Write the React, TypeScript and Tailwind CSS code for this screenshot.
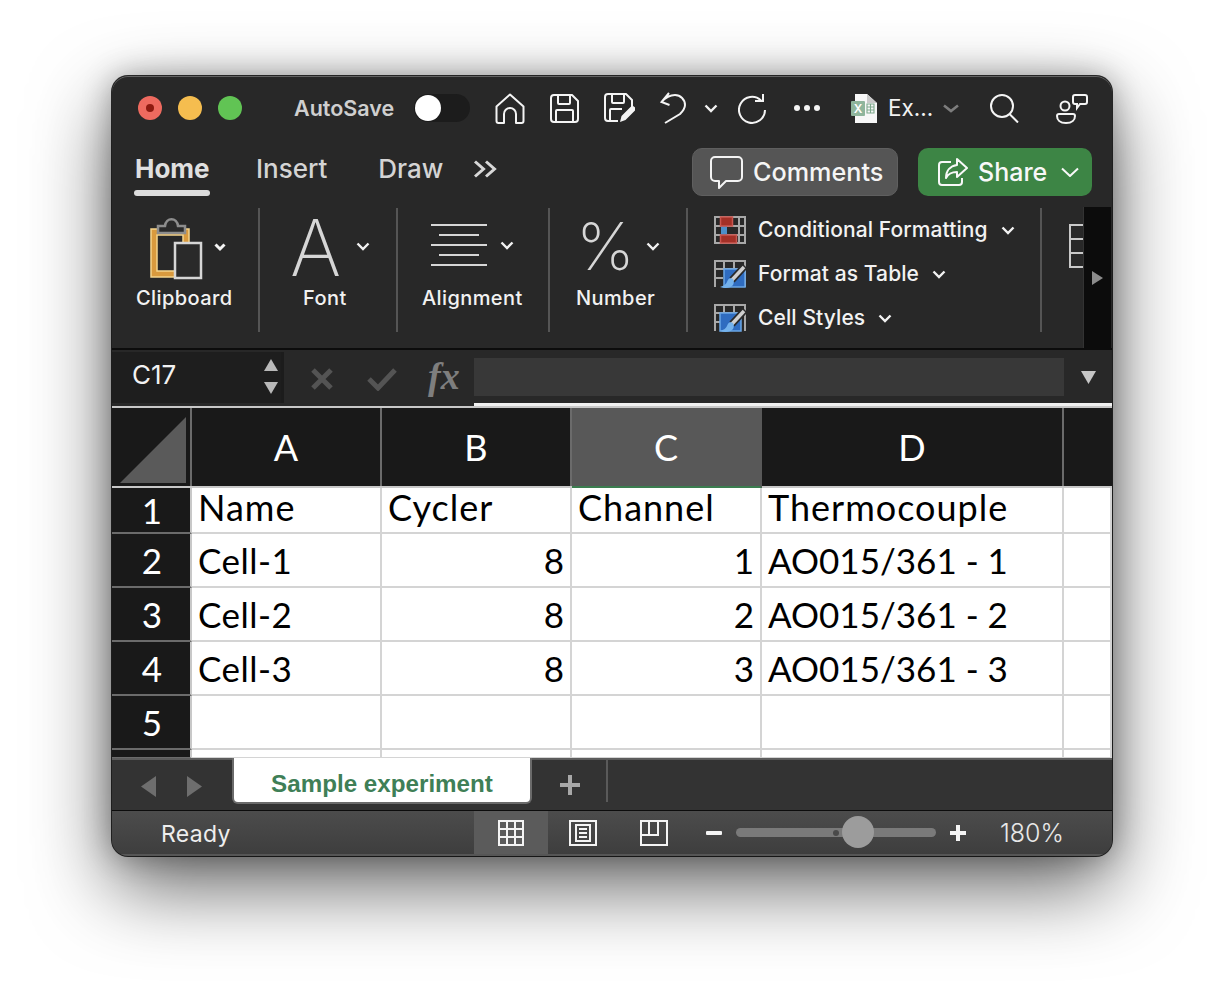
const ui = "font-['Inter',sans-serif]";
const cellFont = "font-['Lato',sans-serif]";

function Chev({ className = "" }: { className?: string }) {
  return (
    <svg viewBox="0 0 14 9" className={"w-[14px] h-[9px] " + className} fill="none" stroke="#f2f2f2" strokeWidth="2.4">
      <path d="M1.5 1.5 7 7l5.5-5.5" />
    </svg>
  );
}

function Lights() {
  return (
    <div className="flex gap-[16px] w-[104px]">
      <div className="w-[24px] h-[24px] rounded-full bg-[#ee6a5f] flex items-center justify-center">
        <div className="w-[8px] h-[8px] rounded-full bg-[#8e1a10]" />
      </div>
      <div className="w-[24px] h-[24px] rounded-full bg-[#f5bd4f]" />
      <div className="w-[24px] h-[24px] rounded-full bg-[#61c454]" />
    </div>
  );
}

function ToolIcons() {
  return (
    <div className="flex items-center">
      <svg viewBox="0 0 30 31" className="ml-[25px] w-[30px] h-[31px]" fill="none" stroke="#f4f4f4" strokeWidth="2" strokeLinejoin="round">
        <path d="M1.5 13.5 15 1.5l13.5 12v14.500a2 2 0 0 1-2 2H21v-9a6 6 0 0 0-12 0v9H3.500a2 2 0 0 1-2-2z" />
      </svg>
      <svg viewBox="0 0 29 29" className="ml-[25px] w-[29px] h-[29px]" fill="none" stroke="#f4f4f4" strokeWidth="2" strokeLinejoin="round">
        <path d="M4 1h18l6 6v18a3 3 0 0 1-3 3H4a3 3 0 0 1-3-3V4a3 3 0 0 1 3-3z" />
        <path d="M8 1v8a1 1 0 0 0 1 1h10a1 1 0 0 0 1-1V1M6 28V17a1 1 0 0 1 1-1h15a1 1 0 0 1 1 1v11" />
      </svg>
      <svg viewBox="0 0 31 30" className="ml-[25px] w-[31px] h-[30px]" fill="none" stroke="#f4f4f4" strokeWidth="2" strokeLinejoin="round">
        <path d="M14 28H4a3 3 0 0 1-3-3V4a3 3 0 0 1 3-3h18l6 6v7" />
        <path d="M8 1v8a1 1 0 0 0 1 1h10a1 1 0 0 0 1-1V1M6 28V17a1 1 0 0 1 1-1h11" />
        <path d="M16 29l1.500-6 9-9a2.500 2.500 0 0 1 4 4l-9 9z" fill="#f4f4f4" stroke="none" />
      </svg>
      <svg viewBox="0 0 27 32" className="ml-[25px] w-[27px] h-[32px]" fill="none" stroke="#f4f4f4" strokeWidth="2">
        <path d="M9 1 1.500 10l8 3M1.500 10C6 5 11 3 15 3a10 10 0 0 1 10 10c0 4-2 6-5 9L5 31" />
      </svg>
      <Chev className="ml-[17px]" />
      <svg viewBox="0 0 28 31" className="ml-[20px] w-[28px] h-[31px]" fill="none" stroke="#f4f4f4" strokeWidth="2">
        <path d="M23 7.500A13 13 0 1 0 27 17" />
        <path d="M25 1v7h-8" />
      </svg>
      <div className="ml-[28px] flex gap-[4px] w-[26px]">
        <div className="w-[6px] h-[6px] rounded-full bg-[#f4f4f4]" />
        <div className="w-[6px] h-[6px] rounded-full bg-[#f4f4f4]" />
        <div className="w-[6px] h-[6px] rounded-full bg-[#f4f4f4]" />
      </div>
      <svg viewBox="0 0 26 29" className="ml-[31px] w-[26px] h-[29px]">
        <path d="M4 0h12l10 9v20H4z" fill="#f7f7f7" />
        <path d="M16 0v9h10z" fill="#c9c9c9" />
        <rect x="0" y="7" width="14" height="15" rx="1" fill="#8fb59c" />
        <text x="7" y="19" textAnchor="middle" fontSize="12" fontFamily="Inter, sans-serif" fill="#fff" fontWeight="600">X</text>
        <path d="M16 10h7v9h-7zM16 13h7M16 16h7M19.500 10v9" stroke="#7fa98d" strokeWidth="1.100" fill="none" />
      </svg>
      <span className="ml-[11px] w-[46px] text-[22.500px] leading-[30px] text-[#f2f2f2]">Ex...</span>
      <svg viewBox="0 0 16 9" className="ml-[9px] w-[16px] h-[9px]" fill="none" stroke="#7d7d7d" strokeWidth="2.600">
        <path d="M1 1.500 8 7l7-5.500" />
      </svg>
      <svg viewBox="0 0 29 29" className="ml-[31px] w-[29px] h-[29px]" fill="none" stroke="#f4f4f4" strokeWidth="2">
        <circle cx="12" cy="12" r="11" />
        <path d="m19.500 20 8.500 8.500" />
      </svg>
      <svg viewBox="0 0 32 31" className="ml-[37px] w-[32px] h-[31px]" fill="none" stroke="#f4f4f4" strokeWidth="2">
        <circle cx="9" cy="13" r="4.500" />
        <path d="M3 21h14a2 2 0 0 1 2 2c0 4-3 7-9 7s-9-3-9-7a2 2 0 0 1 2-2z" />
        <path d="M19 2h10a2 2 0 0 1 2 2v5a2 2 0 0 1-2 2h-5l-3 4v-4h-2a2 2 0 0 1-2-2V4a2 2 0 0 1 2-2z" />
      </svg>
    </div>
  );
}

function Tabs() {
  return (
    <div className="flex h-[58px] items-start pl-[22px]">
      <div className="pt-[15px] w-[76px]">
        <div className="h-[28px] leading-[28px] text-[26px] font-bold text-[#e0e0e0] pl-[1px]">Home</div>
        <div className="mt-[7px] h-[6px] rounded-full bg-[#dcdcdc]" />
      </div>
      <div className="ml-[46px] pt-[15px] h-[28px] leading-[28px] text-[26px] font-medium text-[#d4d4d4] box-content">Insert</div>
      <div className="ml-[51px] pt-[15px] h-[28px] leading-[28px] text-[26px] font-medium text-[#d4d4d4] box-content">Draw</div>
      <svg viewBox="0 0 25 18" className="ml-[30px] mt-[20px] w-[25px] h-[18px]" fill="none" stroke="#d8d8d8" strokeWidth="3">
        <path d="m2 1.500 8.500 7.500L2 16.500M13 1.500 21.500 9 13 16.500" />
      </svg>
      <div className="ml-auto mr-[20px] mt-[8px] flex gap-[20px]">
        <div className="w-[206px] h-[48px] rounded-[10px] bg-[#555555] border border-[#5f5f5f] flex items-center pl-[17px] text-[#f5f5f5]">
          <svg viewBox="0 0 33 33" className="w-[33px] h-[33px]" fill="none" stroke="#f4f4f4" strokeWidth="2" strokeLinejoin="round">
            <path d="M5 1h23a4 4 0 0 1 4 4v16a4 4 0 0 1-4 4H16l-7 7v-7H5a4 4 0 0 1-4-4V5a4 4 0 0 1 4-4z" />
          </svg>
          <span className="ml-[10px] pt-[1px] text-[25.200px] font-medium">Comments</span>
        </div>
        <div className="w-[174px] h-[48px] rounded-[10px] bg-[#3d8545] flex items-center pl-[20px] text-[#f8f8f8]">
          <svg viewBox="0 0 30 28" className="w-[30px] h-[28px]" fill="none" stroke="#f8f8f8" strokeWidth="2" strokeLinejoin="round">
            <path d="M13 4H4a3 3 0 0 0-3 3v17a3 3 0 0 0 3 3h17a3 3 0 0 0 3-3v-4" />
            <path d="M19 1l10 9-10 9v-5c-6 0-9 2-11 6 0-7 4-12 11-13z" />
          </svg>
          <span className="ml-[10px] pt-[1px] text-[25px] font-medium">Share</span>
          <svg viewBox="0 0 18 10" className="ml-[14px] w-[18px] h-[10px]" fill="none" stroke="#f8f8f8" strokeWidth="2">
            <path d="M1 1.500 9 9l8-7.500" />
          </svg>
        </div>
      </div>
    </div>
  );
}

function Divider() {
  return <div className="mt-[10px] h-[124px] w-[2px] bg-[#555555]" />;
}

function Ribbon() {
  const label = "mt-[6px] h-[24px] leading-[24px] text-[20px] text-[#f2f2f2] font-medium whitespace-nowrap tracking-[0.4px]";
  return (
    <div className="flex h-[150px] relative">
      <div className="w-[146px] pl-[24px] pt-[20px]">
        <svg viewBox="0 0 80 62" className="ml-[12px] w-[80px] h-[62px]" fill="none">
          <path d="M3 11h38v17h-6V17H9v36h24v6H3z" fill="#d99a3e" stroke="#f5d58d" strokeWidth="1.500" />
          <path d="M10 8h7c1-9 12-9 13 0h7v7H10z" fill="#2a2a2a" stroke="#8d8d8d" strokeWidth="2.500" />
          <rect x="27" y="25" width="26" height="35" stroke="#d6d6d6" strokeWidth="2.500" fill="#2a2a2a" />
          <path d="M67.500 26.500 72 31l4.500-4.500" stroke="#f4f4f4" strokeWidth="3" />
        </svg>
        <div className={label}>Clipboard</div>
      </div>
      <Divider />
      <div className="w-[136px] pl-[30px] pt-[20px]">
        <div className="flex h-[62px]">
          <span className="w-[54px] -mt-[1px] h-[62px] text-[78px] leading-[62px] font-extralight text-[#d6d6d6]">A</span>
          <Chev className="ml-[12px] mt-[24px]" />
        </div>
        <div className={label + " pl-[13px]"}>Font</div>
      </div>
      <Divider />
      <div className="w-[150px] pl-[24px] pt-[20px]">
        <div className="flex h-[62px]">
          <svg viewBox="0 0 56 44" className="ml-[9px] mt-[6px] w-[56px] h-[44px]" stroke="#d6d6d6" strokeWidth="2">
            <path d="M0 1h56M8 11h40M0 21h56M8 31h40M0 41h56" />
          </svg>
          <Chev className="ml-[13px] mt-[23px]" />
        </div>
        <div className={label}>Alignment</div>
      </div>
      <Divider />
      <div className="w-[136px] pl-[26px] pt-[20px]">
        <div className="flex h-[62px]">
          <span className="w-[56px] -mt-[3px] h-[62px] text-[66px] leading-[62px] font-extralight text-[#d6d6d6]">%</span>
          <Chev className="ml-[14px] mt-[24px]" />
        </div>
        <div className={label}>Number</div>
      </div>
      <Divider />
      <div className="w-[352px] pl-[26px] pt-[16px] flex flex-col gap-[12px]">
        <StyleRow label="Conditional Formatting" icon={<CondIcon />} />
        <StyleRow label="Format as Table" icon={<TableIcon x={10} />} />
        <StyleRow label="Cell Styles" icon={<TableIcon x={6} />} />
      </div>
      <Divider />
      <div className="w-[41px] pt-[26px] pl-[27px]">
        <svg viewBox="0 0 16 44" className="w-[16px] h-[44px]" fill="none" stroke="#c9c9c9" strokeWidth="2">
          <path d="M15 1H1v42h14M1 15h14M1 29h14" />
        </svg>
      </div>
      <div className="w-[28px] mt-[9px] bg-[#0c0c0c] flex items-center justify-center border-l border-[#333]">
        <svg viewBox="0 0 11 14" className="mt-[1px] w-[11px] h-[14px]">
          <path d="M0 0l11 7-11 7z" fill="#8c8c8c" />
        </svg>
      </div>
    </div>
  );
}

function StyleRow({ label, icon }: { label: string; icon: React.ReactNode }) {
  return (
    <div className="h-[32px] flex items-center">
      {icon}
      <span className="ml-[12px] text-[21px] font-medium text-[#f2f2f2] tracking-[0.1px] whitespace-nowrap">{label}</span>
      <Chev className="ml-[13px]" />
    </div>
  );
}

function CondIcon() {
  return (
    <svg viewBox="0 0 32 28" className="w-[32px] h-[28px]" fill="none">
      <path d="M1 1h30v26H1zM1 10h30M1 19h30M25 1v26" stroke="#a8a8a8" strokeWidth="2" />
      <rect x="7" y="10" width="6" height="9" fill="#4d8fc9" />
      <rect x="6.500" y="1" width="12" height="9" fill="#a33027" stroke="#c9564f" strokeWidth="1.500" />
      <rect x="6.500" y="19" width="16" height="8" fill="#a33027" stroke="#c9564f" strokeWidth="1.500" />
    </svg>
  );
}

function TableIcon({ x }: { x: number }) {
  return (
    <svg viewBox="0 0 32 29" className="w-[32px] h-[29px]" fill="none">
      <path d="M1 27V1h30v26M1 9h30M1 18h8M10 1v8M20 1v8" stroke="#a8a8a8" strokeWidth="2" />
      <path d={`M${x} 9h21v18H${x}z`} fill="#2f6cc0" stroke="#6aa6e6" strokeWidth="1.500" />
      <path d="M31 6 18 20" stroke="#2a2a2a" strokeWidth="7" />
      <path d="M30 7 18 20" stroke="#cfcfcf" strokeWidth="3.500" />
      <path d="M19 19c-3-2-5 0-6 3-1 2-3 4-7 5 5 2 11 1 13-2 1-2 1-4 0-6z" fill="#74b2ec" />
    </svg>
  );
}

function FormulaBar() {
  return (
    <div className="flex h-[53px] bg-[#282828]">
      <div className="w-[172px] mt-[2px] bg-[#1e1e1e] flex pl-[20px] pt-[7px] border-r-[3px] border-[#1c1c1c]">
        <span className="text-[26px] leading-[32px] text-[#f2f2f2]">C17</span>
        <div className="ml-[88px] flex flex-col gap-[11px]">
          <svg viewBox="0 0 14 12" className="w-[14px] h-[12px]"><path d="M7 0l7 12H0z" fill="#b9b9b9" /></svg>
          <svg viewBox="0 0 14 12" className="w-[14px] h-[12px]"><path d="M7 12l7-12H0z" fill="#b9b9b9" /></svg>
        </div>
      </div>
      <svg viewBox="0 0 22 22" className="ml-[27px] mt-[18px] w-[22px] h-[22px]" fill="none" stroke="#545454" strokeWidth="5">
        <path d="m2 2 18 18M20 2 2 20" />
      </svg>
      <svg viewBox="0 0 30 24" className="ml-[34px] mt-[17px] w-[30px] h-[24px]" fill="none" stroke="#545454" strokeWidth="5">
        <path d="m2 12 9 9L28 3" />
      </svg>
      <span className="ml-[31px] mt-[6px] w-[30px] font-['Liberation_Serif',serif] italic font-bold text-[38px] leading-[40px] text-[#7e7e7e] whitespace-nowrap">fx</span>
      <div className="ml-[16px] mt-[8px] w-[590px] h-[38px] bg-[#383838]" />
      <svg viewBox="0 0 15 13" className="ml-[17px] mt-[21px] w-[15px] h-[13px]"><path d="M0 0h15l-7.500 13z" fill="#c6c6c6" /></svg>
    </div>
  );
}

const cols = [
  { k: "A", w: "w-[190px]" },
  { k: "B", w: "w-[190px]" },
  { k: "C", w: "w-[190px]" },
  { k: "D", w: "w-[302px]" },
  { k: "", w: "flex-1" },
];

const rows: { n: string; h: string; v: string[]; numeric: boolean; pad: string; text: string }[] = [
  { n: "1", h: "h-[46px]", v: ["Name", "Cycler", "Channel", "Thermocouple", ""], numeric: false, pad: "pb-[7px]", text: "text-[36px] tracking-[1px]" },
  { n: "2", h: "h-[54px]", v: ["Cell-1", "8", "1", "AO015/361 - 1", ""], numeric: true, pad: "", text: "text-[35px]" },
  { n: "3", h: "h-[54px]", v: ["Cell-2", "8", "2", "AO015/361 - 2", ""], numeric: true, pad: "", text: "text-[35px]" },
  { n: "4", h: "h-[54px]", v: ["Cell-3", "8", "3", "AO015/361 - 3", ""], numeric: true, pad: "", text: "text-[35px]" },
  { n: "5", h: "h-[54px]", v: ["", "", "", "", ""], numeric: false, pad: "", text: "text-[35px]" },
  { n: "", h: "h-[9px]", v: ["", "", "", "", ""], numeric: false, pad: "", text: "text-[35px]" },
];

function Sheet() {
  return (
    <div className={cellFont + " h-[355px] overflow-hidden bg-white"}>
      <div className="h-[3px] bg-[#282828] flex">
        <div className="w-[362px]" />
        <div className="flex-1 bg-[#f0f0f0]" />
      </div>
      <div className="h-[2px] bg-[#c8c8c8]" />
      <div className="flex h-[80px] bg-[#191919] border-b-[2px] border-[#c8c8c8]">
        <div className="w-[80px] border-r-[2px] border-[#6b6b6b] pl-[8px] pt-[9px]">
          <svg viewBox="0 0 66 66" className="w-[66px] h-[66px]"><path d="M66 0v66H0z" fill="#5a5a5a" /></svg>
        </div>
        {cols.map((c) => (
          <div
            key={c.k}
            className={
              c.w +
              " flex items-center justify-center text-[36px] text-white border-r-[2px] border-[#6b6b6b] last:border-r-0 " +
              (c.k === "C" ? "bg-[#585858] border-b-[2px] border-b-[#3b7d4f] border-r-[#585858] -mb-[2px]" : "")
            }
          >
            {c.k}
          </div>
        ))}
      </div>
      {rows.map((row) => (
        <div key={row.n} className={"flex " + row.h}>
          <div className="w-[80px] pl-[2px] bg-[#191919] border-r-[2px] border-b-[2px] border-r-[#c8c8c8] border-b-[#6b6b6b] flex items-center justify-center text-[35px] leading-none text-white">
            {row.n}
          </div>
          {cols.map((c, i) => (
            <div
              key={c.k}
              className={
                c.w +
                " border-r-[2px] border-b-[2px] border-[#d4d4d4] flex items-center pl-[6px] pr-[6px] leading-none text-black whitespace-nowrap " +
                row.text +
                " " +
                row.pad +
                " " +
                (row.numeric && (i === 1 || i === 2) ? "justify-end " : "") +
                (row.numeric && i === 0 ? "tracking-[0.5px]" : "")
              }
            >
              {row.v[i]}
            </div>
          ))}
        </div>
      ))}
    </div>
  );
}

function SheetTabs() {
  return (
    <div className="flex h-[53px] bg-[#333333] border-t-[2px] border-[#5c5c5c] border-b-[1px] border-b-[#0c0c0c]">
      <svg viewBox="0 0 15 21" className="ml-[29px] mt-[16px] w-[15px] h-[21px]"><path d="M15 0v21L0 10.500z" fill="#6e6e6e" /></svg>
      <svg viewBox="0 0 15 21" className="ml-[31px] mt-[16px] w-[15px] h-[21px]"><path d="M0 0v21l15-10.500z" fill="#6e6e6e" /></svg>
      <div className="ml-[30px] -mt-[2px] w-[300px] h-[46px] pt-[8px] bg-white rounded-b-[6px] border-x-[2px] border-b-[2px] border-[#6b6b6b] flex items-center justify-center">
        <span className="font-['Liberation_Sans',sans-serif] font-bold text-[24.200px] text-[#3f7f57]">Sample experiment</span>
      </div>
      <svg viewBox="0 0 20 20" className="ml-[28px] mt-[15px] w-[20px] h-[20px]" stroke="#a8a8a8" strokeWidth="4"><path d="M10 0v20M0 10h20" /></svg>
      <div className="ml-[26px] w-[2px] h-[42px] bg-[#5a5a5a]" />
    </div>
  );
}

function StatusBar() {
  return (
    <div className="flex items-stretch h-[45px] bg-gradient-to-b from-[#4c4c4c] to-[#3e3e3e] border-b-[2px] border-[#565656]">
      <div className="ml-[49px] w-[313px] self-center pt-[3px] text-[23px] text-[#eeeeee] font-normal tracking-[0.3px]">Ready</div>
      <div className="w-[74px] bg-[#5b5b5b] flex items-center justify-center">
        <svg viewBox="0 0 26 26" className="w-[26px] h-[26px]" fill="none" stroke="#f4f4f4" strokeWidth="2"><path d="M1 1h24v24H1zM9 1v24M17 1v24M1 9h24M1 17h24" /></svg>
      </div>
      <svg viewBox="0 0 28 26" className="ml-[21px] self-center w-[28px] h-[26px]" fill="none" stroke="#f4f4f4" strokeWidth="2"><path d="M1 1h26v24H1zM7 5h14v16H7zM10 9h8M10 13h8M10 17h8" /></svg>
      <svg viewBox="0 0 28 26" className="ml-[43px] self-center w-[28px] h-[26px]" fill="none" stroke="#f4f4f4" strokeWidth="2"><path d="M1 1h26v24H1zM1 15h17V1M9 1v14" /></svg>
      <div className="ml-[38px] self-center w-[16px] h-[4px] bg-[#f4f4f4] rounded-[1px]" />
      <div className="ml-[14px] self-center w-[200px] h-[9px] rounded-full bg-[#7a7a7a] relative">
        <div className="absolute left-[97px] top-[1.500px] w-[6px] h-[6px] rounded-full bg-[#4a4a4a]" />
        <div className="absolute left-[106px] top-[-12px] w-[32px] h-[32px] rounded-full bg-[#9c9c9c]" />
      </div>
      <svg viewBox="0 0 16 16" className="ml-[14px] self-center w-[16px] h-[16px]" stroke="#f4f4f4" strokeWidth="4"><path d="M8 0v16M0 8h16" /></svg>
      <div className="ml-[34px] self-center pt-[2px] text-[25px] text-[#e8e8e8] font-light">180%</div>
    </div>
  );
}

export default function App() {
  return (
    <div className={ui + " h-[1004px] bg-white pt-[76px] pl-[112px] overflow-hidden"}>
      <div className="relative w-[1000px] h-[780px] rounded-[16px] overflow-hidden bg-[#282828] shadow-[0_30px_80px_rgba(0,0,0,0.62),0_0_30px_rgba(0,0,0,0.3),0_0_0_1px_rgba(0,0,0,0.8)]">
        <div className="h-[64px] flex items-center pl-[26px]">
          <Lights />
          <span className="ml-[52px] w-[100px] text-[21.500px] font-semibold text-[#cfcfcf]">AutoSave</span>
          <div className="ml-[20px] w-[56px] h-[28px] rounded-full bg-[#1c1c1c] relative">
            <div className="absolute left-[1px] top-[1px] w-[26px] h-[26px] rounded-full bg-white" />
          </div>
          <ToolIcons />
        </div>
        <Tabs />
        <Ribbon />
        <div className="h-[2px] bg-[#0c0c0c]" />
        <FormulaBar />
        <Sheet />
        <SheetTabs />
        <StatusBar />
        <div className="absolute inset-0 rounded-[16px] pointer-events-none shadow-[inset_0_1px_0_rgba(255,255,255,0.28)]" />
      </div>
    </div>
  );
}
